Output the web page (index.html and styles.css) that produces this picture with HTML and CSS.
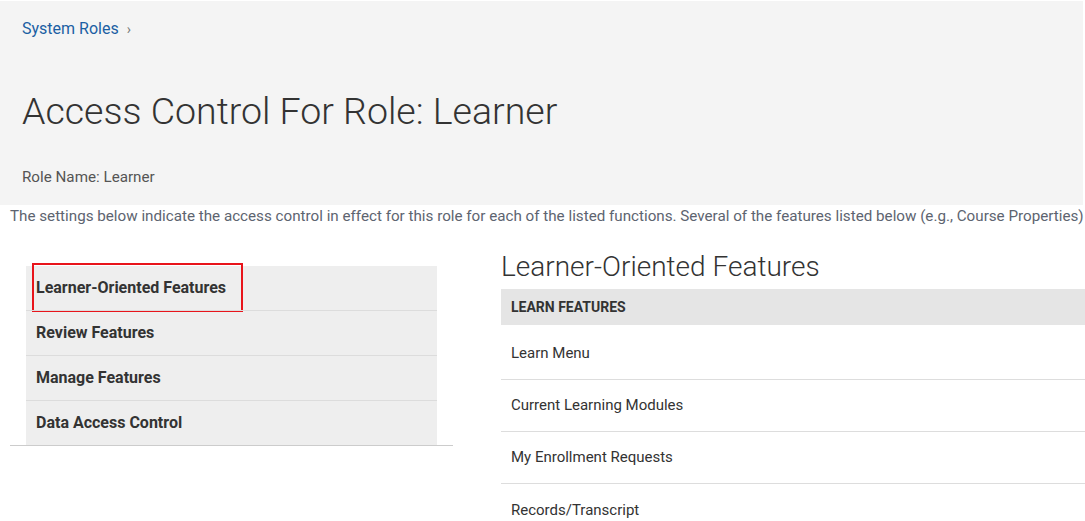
FILE: index.html
```html
<!DOCTYPE html>
<html>
<head>
<meta charset="utf-8">
<link rel="stylesheet" href="styles.css">
</head>
<body>
<div class="page">
  <header class="hero">
    <nav class="crumbs"><a class="crumb-link" href="#">System Roles</a><span class="crumb-sep">›</span></nav>
    <h1 class="title">Access Control For Role: Learner</h1>
    <div class="role-name">Role Name: Learner</div>
  </header>
  <p class="intro">The settings below indicate the access control in effect for this role for each of the listed functions. Several of the features listed below (e.g., Course Properties)</p>
  <div class="main">
    <aside class="side">
      <ul class="side-list">
        <li class="side-item active"><span class="side-label">Learner-Oriented Features</span><span class="highlight"></span></li>
        <li class="side-item"><span class="side-label">Review Features</span></li>
        <li class="side-item"><span class="side-label">Manage Features</span></li>
        <li class="side-item"><span class="side-label">Data Access Control</span></li>
      </ul>
    </aside>
    <section class="content">
      <h2 class="content-title">Learner-Oriented Features</h2>
      <div class="table">
        <div class="thead">LEARN FEATURES</div>
        <div class="row first">Learn Menu</div>
        <div class="row">Current Learning Modules</div>
        <div class="row">My Enrollment Requests</div>
        <div class="row last">Records/Transcript</div>
      </div>
    </section>
  </div>
</div>
</body>
</html>
```
FILE: styles.css
```css
html, body {
  margin: 0;
  padding: 0;
  background: #fff;
  overflow: hidden;
}
body {
  font-family: Roboto, "Liberation Sans", Arial, sans-serif;
  color: #333;
}
.page {
  width: 1300px;
  padding-top: 1px;
}
.hero {
  width: 1039px;
  background: #f4f4f4;
  padding: 17px 22px 18px 22px;
}
.crumbs {
  height: 22px;
  line-height: 22px;
  font-size: 16px;
  display: flex;
  align-items: center;
}
.crumb-link {
  color: #1b5fa3;
  text-decoration: none;
}
.crumb-sep {
  color: #777;
  font-size: 14px;
  margin-left: 8px;
}
.title {
  margin: 49px 0 0 0;
  font-size: 37.5px;
  line-height: 44px;
  font-weight: 300;
  color: #333;
}
.role-name {
  margin-top: 34px;
  font-size: 15.2px;
  line-height: 20px;
  color: #555;
}
.intro {
  margin: 0;
  padding: 1px 0 0 10px;
  font-size: 15.2px;
  line-height: 20px;
  color: #5d6470;
  white-space: nowrap;
}
.main {
  display: flex;
  gap: 48px;
  padding-left: 10px;
}
.side {
  width: 443px;
  padding-top: 40px;
}
.side-list {
  list-style: none;
  margin: 0 16px;
  padding: 0;
  background: #eee;
}
.side-item {
  position: relative;
  height: 44px;
  line-height: 44px;
  padding-left: 10px;
  font-size: 16px;
  font-weight: 700;
  color: #333;
  border-top: 1px solid #dcdcdc;
}
.side-item.active {
  border-top: none;
}
.side::after {
  content: "";
  display: block;
  height: 1px;
  background: #ccc;
}
.highlight {
  position: absolute;
  left: 6px;
  top: -3px;
  width: 207px;
  height: 45px;
  border: 2px solid #e8141b;
}
.content {
  width: 700px;
  padding-top: 24px;
}
.content-title {
  margin: 0 0 5px 0;
  font-size: 28px;
  line-height: 34px;
  font-weight: 300;
  color: #333;
}
.thead {
  background: #e5e5e5;
  height: 36px;
  line-height: 36px;
  padding-left: 10px;
  font-size: 14px;
  font-weight: 700;
  color: #333;
}
.row {
  height: 51px;
  line-height: 51px;
  padding-left: 10px;
  font-size: 15px;
  color: #333;
  border-bottom: 1px solid #ddd;
}
.row.first {
  height: 54px;
  line-height: 56px;
}
.row.last {
  line-height: 53px;
}
```
